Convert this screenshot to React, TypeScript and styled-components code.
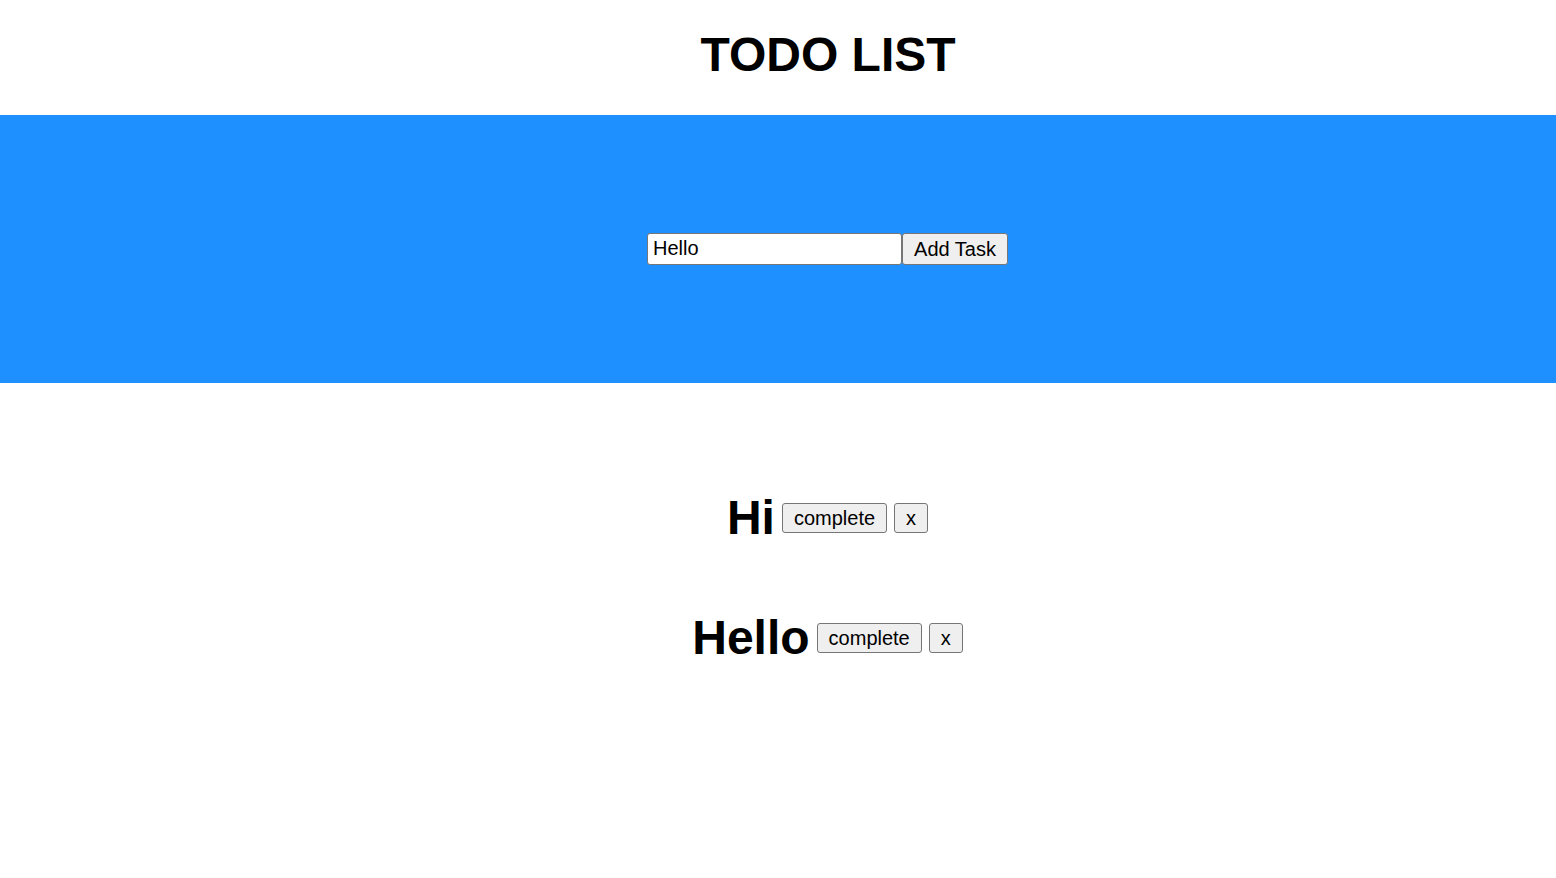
import React from "react";
import styled, { createGlobalStyle } from "styled-components";

const Global = createGlobalStyle`
  html, body { margin: 0; padding: 0; background: #fff; }
  body { font-family: "Liberation Sans", Arial, sans-serif; color: #000; }
`;

const Header = styled.header`
  height: 115px;
  display: flex;
  align-items: center;
  justify-content: center;
`;

const Title = styled.h1`
  margin: 0 0 0 100px;
  font-size: 48px;
  font-weight: 700;
  line-height: 1;
  padding-bottom: 6px;
`;

const Band = styled.section`
  height: 268px;
  background: #1e90ff;
  display: flex;
  align-items: center;
  justify-content: center;
`;

const Form = styled.form`
  display: flex;
  align-items: stretch;
  margin-left: 99px;
  margin-top: -1px;
`;

const Input = styled.input`
  box-sizing: border-box;
  width: 255px;
  height: 32px;
  border: 1px solid #767676;
  border-radius: 3px;
  padding: 0 5px;
  font-family: "Liberation Sans", Arial, sans-serif;
  font-size: 20px;
  color: #000;
  background: #fff;
  outline: none;
`;

const Button = styled.button<{ $h: number }>`
  box-sizing: border-box;
  height: ${(p) => p.$h}px;
  border: 1px solid #767676;
  border-radius: 3px;
  background: #efefef;
  padding: 0 11px;
  font-family: "Liberation Sans", Arial, sans-serif;
  font-size: 20px;
  color: #000;
  line-height: 1;
`;

const List = styled.ul`
  list-style: none;
  margin: 0;
  padding: 102px 0 0;
  display: flex;
  flex-direction: column;
  align-items: center;
  gap: 55px;
`;

const Item = styled.li`
  display: flex;
  align-items: center;
  gap: 7px;
  margin-left: 99px;
`;

const TaskText = styled.span`
  font-size: 48px;
  font-weight: 700;
  line-height: 65px;
`;

const tasks = ["Hi", "Hello"];

export default function App() {
  return (
    <>
      <Global />
      <Header>
        <Title>TODO LIST</Title>
      </Header>
      <Band>
        <Form onSubmit={(e) => e.preventDefault()}>
          <Input defaultValue="Hello" />
          <Button $h={32} type="submit">Add Task</Button>
        </Form>
      </Band>
      <List>
        {tasks.map((t) => (
          <Item key={t}>
            <TaskText>{t}</TaskText>
            <Button $h={30}>complete</Button>
            <Button $h={30}>x</Button>
          </Item>
        ))}
      </List>
    </>
  );
}
